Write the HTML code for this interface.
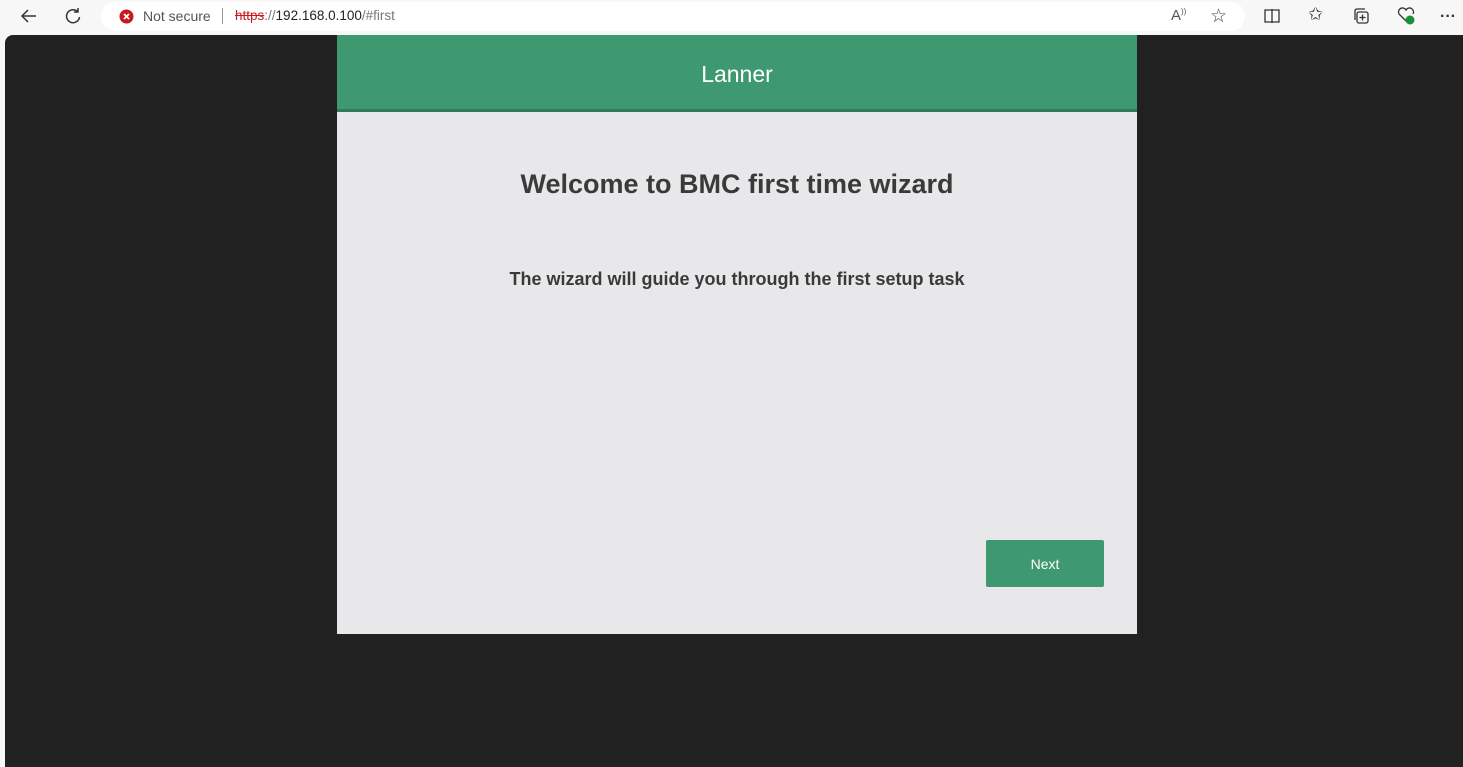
<!DOCTYPE html>
<html><head><style>
*{margin:0;padding:0;box-sizing:border-box}
body{width:1463px;height:767px;background:#f7f7f7;font-family:"Liberation Sans",sans-serif;position:relative;overflow:hidden}
.bar{position:absolute;left:0;top:0;width:1463px;height:35px;background:#f7f7f7}
.url{position:absolute;left:101px;top:2px;width:1144px;height:29px;background:#fff;border-radius:15px}
.vp{position:absolute;left:5px;top:35px;width:1458px;height:732px;background:#212121;border-top-left-radius:8px}
.panel{position:absolute;left:337px;top:35px;width:800px;height:599px;background:#e8e8ea}
.hdr{height:77px;background:#3e9971;border-bottom:3px solid #327a5a;color:#fff;font-size:23px;text-align:center;line-height:78px}
h1{position:absolute;top:134px;width:100%;text-align:center;font-size:27px;color:#3a3a3a;font-weight:bold}
p{position:absolute;top:234px;width:100%;text-align:center;font-size:18px;color:#3a3a3a;font-weight:bold}
.btn{position:absolute;left:649px;top:505px;width:118px;height:47px;background:#3e9971;border-radius:2px;color:#fff;font-size:14px;text-align:center;line-height:48px}
.t{position:absolute;font-size:14px;color:#555}
svg{position:absolute}
</style></head><body>
<div class="bar">
<svg style="left:18px;top:6px" width="22" height="20" viewBox="0 0 22 20"><path d="M18 10H4M10 4L4 10L10 16" fill="none" stroke="#333" stroke-width="1.5"/></svg>
<svg style="left:63px;top:6px" width="20" height="20" viewBox="0 0 20 20"><path d="M15 6A6.5 6.5 0 1 0 16.5 11M15 2V6H11" fill="none" stroke="#333" stroke-width="1.5"/></svg>
<div class="url">
<svg style="left:18px;top:7px" width="15" height="15"><circle cx="7.5" cy="7.5" r="7" fill="#c8191f"/><path d="M5 5L10 10M10 5L5 10" stroke="#fff" stroke-width="1.8"/></svg>
<span class="t" style="left:42px;top:6px">Not secure</span>
<span style="position:absolute;left:121px;top:6px;width:1px;height:16px;background:#999"></span>
<span class="t" style="left:134px;top:6px;font-size:13.5px;color:#222"><s style="color:#c8191f">https</s><span style="color:#777">://</span>192.168.0.100<span style="color:#777">/#first</span></span>
<span class="t" style="left:1070px;top:5px;font-size:15px">A<sup style="font-size:8px">))</sup></span>
<span class="t" style="left:1109px;top:3px;font-size:19px;color:#444">☆</span>
</div>
<svg style="left:1263px;top:8px" width="18" height="16"><path d="M2 2H16V14H2ZM9 1V15" fill="none" stroke="#333" stroke-width="1.3"/></svg>
<span class="t" style="left:1308px;top:4px;font-size:18px;color:#333">✩</span>
<svg style="left:1352px;top:7px" width="18" height="18"><rect x="5" y="5" width="11" height="11" rx="2" fill="none" stroke="#333" stroke-width="1.3"/><path d="M3 13V4Q3 2 5 2H13M10.5 7.5V13.5M7.5 10.5H13.5" fill="none" stroke="#333" stroke-width="1.3"/></svg>
<svg style="left:1396px;top:6px" width="20" height="20"><path d="M10 15L3 8A3.5 3.5 0 0 1 10 4A3.5 3.5 0 0 1 17 8" fill="none" stroke="#333" stroke-width="1.3"/><circle cx="14" cy="14" r="4.5" fill="#1a8f3c"/></svg>
<span class="t" style="left:1440px;top:8px;font-size:16px;color:#333;font-weight:bold">···</span>
</div>
<div class="vp"></div>
<div class="panel">
<div class="hdr">Lanner</div>
<h1>Welcome to BMC first time wizard</h1>
<p>The wizard will guide you through the first setup task</p>
<div class="btn">Next</div>
</div>
</body></html>
